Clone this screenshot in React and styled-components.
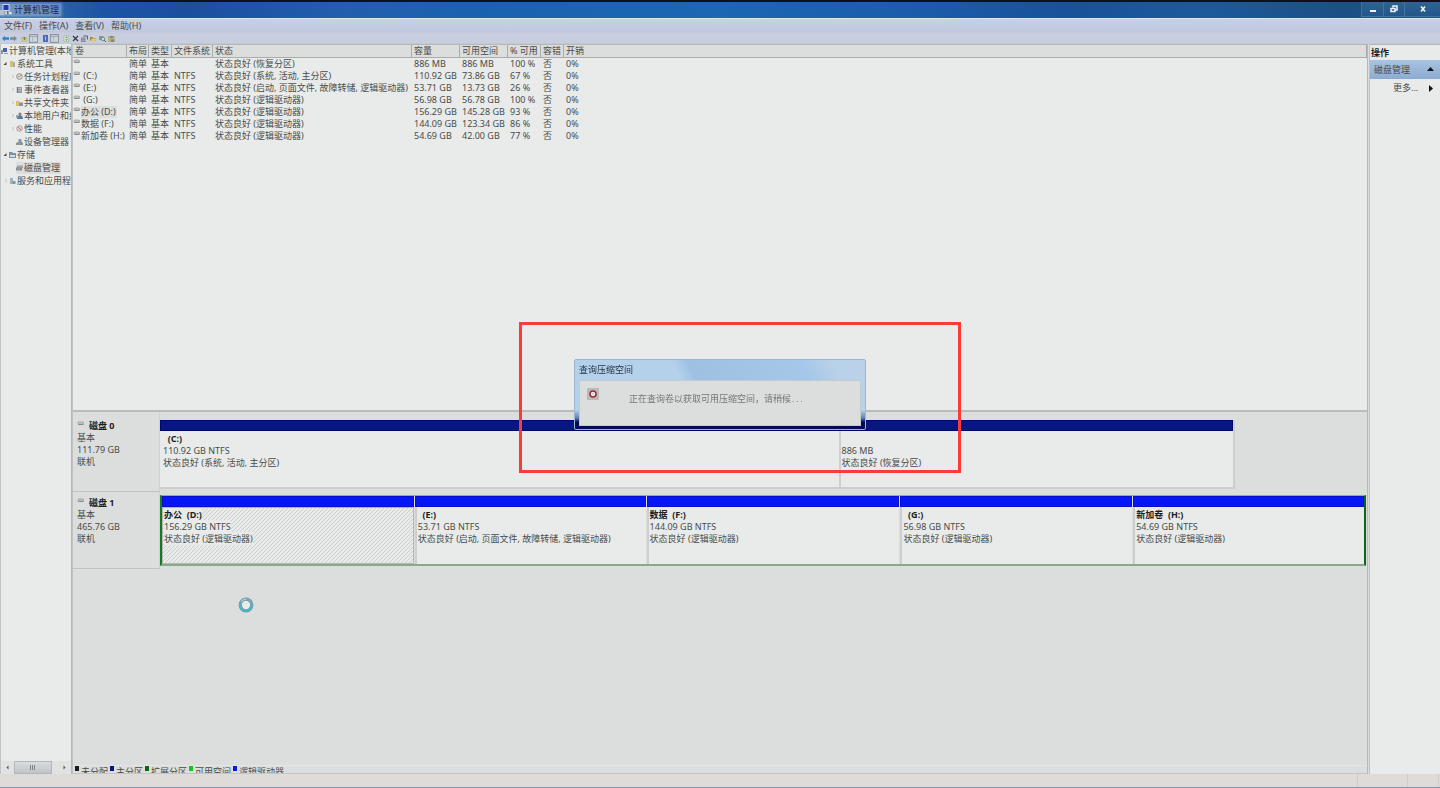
import React from 'react'
import styled, { createGlobalStyle, css } from 'styled-components'

const GlobalStyle = createGlobalStyle`
  * { box-sizing: border-box; }
  body {
    margin: 0;
    background: #dcdedd;
    color: #484b4a;
    font: 9px/12px "Noto Sans", "Noto Sans CJK SC", sans-serif;
    overflow: hidden;
  }
  button {
    border: 0;
    padding: 0;
    margin: 0;
    background: none;
    color: inherit;
    font: inherit;
  }
  svg { display: block; flex: none; }
`

const Window = styled.div`
  display: flex;
  flex-direction: column;
  height: 100vh;
  border-top: 2px solid #111;
  border-bottom: 1px solid #7398b8;
`

/* title bar */

const TitleBar = styled.header`
  display: flex;
  flex: none;
  height: 16px;
  align-items: center;
  background: linear-gradient(90deg, #3a6fb2 0, #1c55a5 7%, #1a4f9e 13%, #225fae 24%, #1a62b0 32%, #1b67b4 50%, #1a5cab 64%, #18529a 74%, #1c5a9c 84%, #1c4f86 93%, #1f5388 100%);
`

const TitleLabel = styled.h1`
  display: flex;
  align-items: center;
  gap: 2px;
  margin: 0;
  padding-right: 2px;
  font-size: 9px;
  font-weight: 400;
  line-height: 12px;
  color: #1f2937;
  background: rgba(150, 175, 210, 0.6);
  box-shadow: 0 0 3px 1px rgba(150, 175, 210, 0.6);
`

const WindowButtons = styled.div`
  display: flex;
  align-self: flex-start;
  margin-left: auto;
  height: 15px;
  border: 1px solid #47729f;
  border-width: 0 0 1px 1px;
`

const WindowButton = styled.button`
  display: flex;
  align-items: center;
  justify-content: center;
  width: ${p => (p.$wide ? 36 : 21)}px;
  background: linear-gradient(#2f6297, #235689);

  &:not(:first-child) { border-left: 1px solid #47729f; }
`

/* menu and toolbar */

const MenuBar = styled.nav`
  display: flex;
  flex: none;
  gap: 7px;
  height: 14px;
  padding: 1px 4px 0;
  border-top: 1px solid #dfe5ee;
  background: linear-gradient(#c9d0e1, #bfc8df);
`

const Toolbar = styled.div`
  display: flex;
  flex: none;
  gap: 4px;
  height: 12px;
  align-items: center;
  padding-left: 2px;
  background: #c6cee0;
  border-top: 1px solid #c8c9dc;
  border-bottom: 1px solid #c3c9d1;
`

const ToolGroup = styled.div`
  display: flex;
  gap: ${p => p.$gap}px;
`

const ToolButton = styled.button`
  display: flex;
  align-items: center;
  justify-content: center;
  height: 9px;
  width: ${p => (p.$pressed ? 9 : 7)}px;
  ${p => p.$pressed && css`
    border: 1px solid #8d96a3;
    background: #c0c8d2;
  `}
`

/* body */

const Workspace = styled.div`
  display: flex;
  flex: 1;
  min-height: 0;
`

const TreePane = styled.aside`
  display: flex;
  flex: none;
  flex-direction: column;
  width: 71px;
  border-left: 1px solid #c0c4c4;
  background: #e8ebe9;
  overflow: hidden;
`

const Tree = styled.ul`
  flex: 1;
  margin: 0;
  padding: 0;
  list-style: none;
  overflow: hidden;
`

const TreeItem = styled.li`
  display: flex;
  align-items: center;
  height: 13px;
  padding-left: ${p => [0, 2, 9][p.$level]}px;
  white-space: nowrap;
`

const Twisty = styled.span`
  display: flex;
  flex: none;
  width: 6px;
`

const TreeLabel = styled.span`
  display: flex;
  align-items: center;
  gap: 1px;
  padding-right: 1px;
  ${p => p.$selected && css`
    background: #dcdedd;
  `}
`

const ScrollBar = styled.div`
  display: flex;
  flex: none;
  height: 13px;
  background: #e0e3e2;
`

const ScrollButton = styled.button`
  display: flex;
  align-items: center;
  justify-content: center;
  width: 13px;
`

const ScrollThumb = styled.div`
  display: flex;
  align-items: center;
  justify-content: center;
  width: 38px;
  margin-right: 6px;
  border: 1px solid #b3b7ba;
  background: linear-gradient(#d9dcde, #c0c4c8);
`

const Splitter = styled.div`
  flex: none;
  width: ${p => p.$width}px;
  background: #dcdedd;
  border-left: 1px solid #b5b8b7;
  border-right: 1px solid #bfc2c1;
`

const Main = styled.main`
  display: flex;
  flex: 1;
  flex-direction: column;
  min-width: 0;
  border-bottom: 1px solid #c3c6c5;
`

const VolumeList = styled.section`
  flex: none;
  height: 368px;
  background: #e8ebe9;
  border-top: 1px solid #b5b8b7;
  border-bottom: 2px solid #b9bcbb;
`

const VolumeTable = styled.table`
  width: 100%;
  table-layout: fixed;
  border-collapse: separate;
  border-spacing: 0;

  th, td {
    padding: 0 0 0 2px;
    white-space: nowrap;
    text-align: left;
    font-weight: 400;
  }
  th {
    height: 13px;
    background: #dcdedd;
    border-right: 1px solid #a9acab;
    border-bottom: 1px solid #a9acab;
  }
  td { height: 12px; }
  td:first-child { padding-left: 0; }
`

const VolumeName = styled.span`
  display: flex;
  height: 12px;
  white-space: pre;
`

const NameText = styled.span`
  padding-right: 1px;
  background: ${p => (p.$selected ? '#dcdedd' : 'transparent')};
`

/* disk map */

const DiskMap = styled.section`
  display: flex;
  flex: 1;
  flex-direction: column;
  min-height: 0;
  background: #dcdedd;
`

const DiskRow = styled.div`
  display: flex;
  height: ${p => p.$height}px;
`

const DiskInfo = styled.div`
  flex: none;
  width: 87px;
  padding: ${p => p.$top}px 0 0 4px;
  border-right: 1px solid #d0d2d1;
  border-bottom: 1px solid #c0c3c2;
`

const DiskName = styled.strong`
  display: flex;
  gap: 4px;
  color: #1c1e1d;
`

const Track = styled.div`
  flex: 1;
  min-width: 0;
  padding: ${p => p.$top}px 1px 3px 0;
`

const Volumes = styled.div`
  display: flex;
  height: 100%;
  ${p => p.$extended ? css`
    gap: 1px;
    border: 1px solid #86b587;
    border-left: 2px solid #167a20;
    border-right: 2px solid #0c6416;
    border-bottom: 2px solid #86ab88;
  ` : css`
    width: calc(89% + 2px);
    border-right: 2px solid #cdcfce;
    border-bottom: 2px solid #cdcfce;
  `}
`

const Volume = styled.div`
  display: flex;
  flex: ${p => p.$size} 1 0;
  flex-direction: column;
  min-width: 0;

  &:not(:first-child) > p { border-left: 2px solid #cdcfce; }
`

const Bar = styled.div`
  flex: none;
  height: 11px;
  border: 1px solid ${p => (p.$logical ? '#0a10c8' : '#02066b')};
  background: ${p => (p.$logical ? '#0716f5' : '#081682')};
`

const VolumeBody = styled.p`
  flex: 1;
  margin: 0;
  padding: 2px 0 0 ${p => (p.$first ? 3 : 1)}px;
  background: #e8ebe9;
  white-space: pre;
  overflow: hidden;
  ${p => p.$selected && css`
    border: 1px solid #b3b6b5;
    padding: 1px 0 0 1px;
    background-image: linear-gradient(135deg, #cbcecd 20%, #e8ebe9 20%, #e8ebe9 55%, #cbcecd 55%, #cbcecd 70%, #e8ebe9 70%);
    background-size: 4px 4px;

    span, strong { background: #e8ebe9; }
  `}
`

const Strong = styled.strong`
  color: #1c1e1d;
`

const Legend = styled.ul`
  display: flex;
  gap: 2px;
  flex: none;
  height: 8px;
  margin: auto 0 0;
  padding: 0 0 0 2px;
  list-style: none;
  border-top: 1px solid #e3e6e4;
  overflow: hidden;
`

const LegendItem = styled.li`
  display: flex;
  gap: 2px;
  line-height: 12px;

  &::before {
    content: '';
    width: 4px;
    height: 5px;
    background: ${p => p.$color};
  }
`

/* actions */

const Actions = styled.aside`
  flex: none;
  width: 70px;
  border-top: 1px solid #b5b8b7;
  background: #e8ebe9;
`

const ActionsTitle = styled.h2`
  height: 15px;
  margin: 0;
  padding: 2px 0 0 1px;
  font-size: 9px;
  line-height: 12px;
  color: #1c1e1d;
`

const ActionsButton = styled.button`
  display: flex;
  align-items: center;
  justify-content: space-between;
  width: 100%;
  height: 18px;
  padding: 0 6px 0 4px;
  ${p => p.$heading ? css`
    height: 19px;
    background: linear-gradient(#a8c3e2, #8dabd0);
  ` : css`
    padding-left: 23px;
  `}
`

const StatusBar = styled.footer`
  display: flex;
  flex: none;
  justify-content: flex-end;
  height: 13px;
  padding-right: 1px;
  background: #dedbd9;
`

const StatusCell = styled.span`
  width: ${p => p.$width}px;
  border-left: 1px solid #cfcdcc;

  &:last-child { border-right: 1px solid #cfcdcc; }
`

/* things floating over the window */

const Dialog = styled.section`
  position: fixed;
  top: 50%;
  left: 50%;
  width: 292px;
  height: 71px;
  margin: -35px 0 0 -146px;
  padding: 0 4px 4px;
  border: 1px solid #9db4c9;
  border-radius: 2px;
  background:
    linear-gradient(#a5c8ea00 0 50px, #5f82b0 58px, #060b58 62px),
    linear-gradient(65deg, #b4d1ec 0 40%, #9dc0e3 45%, #a5c7ea 80%, #b9d2e9 90%);
`

const DialogTitle = styled.h2`
  margin: 0;
  height: 20px;
  font-size: 9px;
  font-weight: 400;
  line-height: 20px;
  color: #263341;
`

const DialogBody = styled.div`
  display: flex;
  height: 46px;
  padding: 7px;
  border: 1px solid #c3cbd2;
  background: #dcdedd;
  color: #747675;
`

const DialogText = styled.p`
  margin: 5px 0 0 30px;
  font-family: "Noto Sans CJK SC", sans-serif;
  white-space: nowrap;
`

const Dots = styled.span`
  font-family: "Liberation Mono", monospace;
  font-size: 7px;
`

const Highlight = styled.div`
  position: fixed;
  top: 50%;
  left: 50%;
  width: 442px;
  height: 151px;
  margin: -72px 0 0 -201px;
  border: 3px solid #fb3a3a;
  pointer-events: none;
`

const BusyCursor = styled.div`
  position: fixed;
  top: 597px;
  left: 238px;
`

const drawings = {
  app: <><rect x="1.500" y="0" width="4" height="4.200" fill="#dbe4ef" /><rect x="2" y=".5" width="3" height="3" fill="#1f37b5" /><path d="M0 3.500h2.500v3H0z" fill="#b9c0c6" /><path d="M3 4.500h3.500l.5 1.500H3z" fill="#e0e2e0" /><path d="M4 4h1v2H4z" fill="#63707c" /></>,
  computer: <><rect x="2" y="1" width="4" height="4" fill="#4a66a6" /><path d="M0 3h2v4H0zM3 6h4v1H3z" fill="#8d99a5" /></>,
  tools: <><path d="M1 1h3v6H1z" fill="#d3bd80" /><path d="M4 2h2v5H4z" fill="#a7acaf" /></>,
  clock: <><circle cx="3.5" cy="3.5" r="2.800" fill="#e3e3dc" stroke="#85898d" /><path d="M3.500 3.700 5 2M3.500 3.700H2" stroke="#a17b2f" fill="none" strokeWidth=".8" /></>,
  event: <><rect x="1" y="1" width="5" height="6" fill="#949cab" /><path d="M2 2.500h3M2 4.500h3" stroke="#cdb3ba" /><path d="M1.300 1v6" stroke="#5f6fa0" /></>,
  share: <><path d="M0 2h3l1 1h3v4H0z" fill="#d9bd74" /><path d="M3 4h4v3H3z" fill="#8095a8" /></>,
  users: <><circle cx="4" cy="2" r="1.600" fill="#8f7f78" /><path d="M1 7c0-3 2-4 3-4s3 1 3 4z" fill="#5c77a8" /><path d="M0 3h2v3H0z" fill="#9aa5ae" /></>,
  perf: <><circle cx="3.5" cy="3.5" r="2.800" fill="#e4d2d0" stroke="#b38f8d" strokeWidth=".8" /><path d="M2 2l3 3" stroke="#b9706e" /></>,
  device: <><path d="M2.500 1h3v3h-3z" fill="#8995a0" /><path d="M0 5l2-1h4l1 1v2H0z" fill="#8a959e" /></>,
  storage: <><path d="M0 1h3l1 1h3v5H0z" fill="#7591ab" /><path d="M1 4h5v2H1z" fill="#d3dce2" /></>,
  disk: <><path d="M1 1.500h6v2.500H1z" fill="#a3a7a6" /><path d="M0 3.500h6v3H0z" fill="#858a89" /><path d="M1 5h3" stroke="#b9bcbb" strokeWidth=".7" /></>,
  services: <><path d="M1 1h3v6H1z" fill="#9fb2bf" /><path d="M3.500 4h3v3h-3z" fill="#7f97aa" /></>,
  back: <path d="M0 3.500 3 .8v1.500h4v2.400H3v1.500z" fill="#2688cf" />,
  forward: <path d="M7 3.500 4 .8v1.500H0v2.400h4v1.500z" fill="#7e8996" />,
  up: <><path d="M0 1.500h3l1 1h3V7H0z" fill="#cfc38c" /><path d="M3.500 5V2M2 3.500 3.500 2 5 3.500" stroke="#4c9650" fill="none" /></>,
  pane: <><rect x="0" y="1" width="7" height="5" fill="#cfd4d8" /><path d="M0 1.500h7" stroke="#a3abb5" /><path d="M2.500 2v4" stroke="#b1b8c0" /></>,
  help: <><rect x="1" y="0" width="5" height="7" fill="#4b6bb8" /><path d="M3.500 1.500v4" stroke="#cdd8ee" strokeWidth=".8" /></>,
  refresh: <><rect x="1" y=".3" width="4.800" height="6.400" fill="#dfe6e1" stroke="#a0b0a2" strokeWidth=".6" /><path d="M3.500 1.200 5 3H2zM3.500 6 2 4.200h3z" fill="#5fa361" /></>,
  remove: <path d="M1 1l5 5M6 1 1 6" stroke="#333a41" strokeWidth="1.200" />,
  props: <><path d="M0 2.500h4.500V7H0z" fill="#7f8790" /><path d="M1 4h2.500M1 5.500h2.500" stroke="#c5ccd2" strokeWidth=".6" /><path d="M2.500 1H6.500v3.500" fill="none" stroke="#5a626b" /></>,
  open: <><path d="M0 2h3v1h3v3H0z" fill="#a98d3c" /><path d="M2 3.500h5L5 6.500H0z" fill="#dccb7e" /></>,
  search: <><path d="M0 1h4.500v4H0z" fill="#8a9c7e" /><circle cx="4" cy="4" r="1.700" fill="#cbdde6" stroke="#6b7c88" strokeWidth=".8" /><path d="M5 5l2 2" stroke="#555f68" /></>,
  save: <><path d="M0 1h7v6H0z" fill="#b9b27a" /><path d="M2 1h3v2H2zM3 4.500h3V7H3z" fill="#7c8591" /></>,
}

function Icon({ name, size = 7 }) {
  return <svg width={size} height={size} viewBox="0 0 7 7" aria-hidden="true">{drawings[name]}</svg>
}

function DriveIcon() {
  return (
    <svg width="8" height="8" viewBox="0 0 8 8" aria-hidden="true">
      <rect x="1" y="2" width="5.500" height="2.500" rx="1" fill="#c9cccb" stroke="#8b8f8e" strokeWidth=".7" />
      <path d="M1.500 4.300h5" stroke="#6f7372" strokeWidth=".7" />
    </svg>
  )
}

const tree = [
  { level: 0, icon: 'computer', text: '计算机管理(本地)' },
  { level: 1, icon: 'tools', text: '系统工具', open: true },
  { level: 2, icon: 'clock', text: '任务计划程序', closed: true },
  { level: 2, icon: 'event', text: '事件查看器', closed: true },
  { level: 2, icon: 'share', text: '共享文件夹', closed: true },
  { level: 2, icon: 'users', text: '本地用户和组', closed: true },
  { level: 2, icon: 'perf', text: '性能', closed: true },
  { level: 2, icon: 'device', text: '设备管理器' },
  { level: 1, icon: 'storage', text: '存储', open: true },
  { level: 2, icon: 'disk', text: '磁盘管理', selected: true },
  { level: 1, icon: 'services', text: '服务和应用程序', closed: true },
]

const columns = [
  ['卷', 54], ['布局', 22], ['类型', 23], ['文件系统', 41], ['状态', 199],
  ['容量', 48], ['可用空间', 48], ['% 可用', 33], ['容错', 23], ['开销'],
]

const volumes = [
  ['', '', '状态良好 (恢复分区)', '886 MB', '886 MB', '100 %'],
  [' (C:)', 'NTFS', '状态良好 (系统, 活动, 主分区)', '110.92 GB', '73.86 GB', '67 %'],
  [' (E:)', 'NTFS', '状态良好 (启动, 页面文件, 故障转储, 逻辑驱动器)', '53.71 GB', '13.73 GB', '26 %'],
  [' (G:)', 'NTFS', '状态良好 (逻辑驱动器)', '56.98 GB', '56.78 GB', '100 %'],
  ['办公 (D:)', 'NTFS', '状态良好 (逻辑驱动器)', '156.29 GB', '145.28 GB', '93 %'],
  ['数据 (F:)', 'NTFS', '状态良好 (逻辑驱动器)', '144.09 GB', '123.34 GB', '86 %'],
  ['新加卷 (H:)', 'NTFS', '状态良好 (逻辑驱动器)', '54.69 GB', '42.00 GB', '77 %'],
]

const disks = [
  {
    name: '磁盘 0', size: '111.79 GB', height: 80, infoTop: 8, trackTop: 8,
    parts: [
      { size: 679, name: '  (C:)', info: '110.92 GB NTFS', status: '状态良好 (系统, 活动, 主分区)' },
      { size: 395, name: ' ', info: '886 MB', status: '状态良好 (恢复分区)' },
    ],
  },
  {
    name: '磁盘 1', size: '465.76 GB', height: 77, infoTop: 5, trackTop: 3, extended: true,
    parts: [
      { size: 252, name: '办公  (D:)', info: '156.29 GB NTFS', status: '状态良好 (逻辑驱动器)', selected: true },
      { size: 231, name: '  (E:)', info: '53.71 GB NTFS', status: '状态良好 (启动, 页面文件, 故障转储, 逻辑驱动器)' },
      { size: 253, name: '数据  (F:)', info: '144.09 GB NTFS', status: '状态良好 (逻辑驱动器)' },
      { size: 232, name: '  (G:)', info: '56.98 GB NTFS', status: '状态良好 (逻辑驱动器)' },
      { size: 231, name: '新加卷  (H:)', info: '54.69 GB NTFS', status: '状态良好 (逻辑驱动器)' },
    ],
  },
]

const legend = [
  ['未分配', '#1b1b1b'], ['主分区', '#081682'], ['扩展分区', '#0c6416'],
  ['可用空间', '#12c81c'], ['逻辑驱动器', '#0716f5'],
]

const tools = [
  { gap: 1, items: [['back', '后退'], ['forward', '前进']] },
  { gap: 1, items: [['up', '向上'], ['pane', '控制台树', true]] },
  { gap: 1, items: [['help', '帮助'], ['pane', '操作窗格', true]] },
  { gap: 2, items: [['refresh', '刷新'], ['remove', '删除'], ['props', '属性'], ['open', '打开'], ['search', '查找'], ['save', '保存']] },
]

function VolumeGrid() {
  return (
    <VolumeTable>
      <colgroup>
        {columns.map(([name, width]) => <col key={name} width={width} />)}
      </colgroup>
      <thead>
        <tr>{columns.map(([name]) => <th key={name} scope="col">{name}</th>)}</tr>
      </thead>
      <tbody>
        {volumes.map(([name, fs, status, size, free, percent]) => (
          <tr key={name}>
            <td>
              <VolumeName>
                <DriveIcon />
                <NameText $selected={name === '办公 (D:)'}>{name}</NameText>
              </VolumeName>
            </td>
            <td>简单</td>
            <td>基本</td>
            <td>{fs}</td>
            <td>{status}</td>
            <td>{size}</td>
            <td>{free}</td>
            <td>{percent}</td>
            <td>否</td>
            <td>0%</td>
          </tr>
        ))}
      </tbody>
    </VolumeTable>
  )
}

function Disk({ disk }) {
  return (
    <DiskRow $height={disk.height}>
      <DiskInfo $top={disk.infoTop}>
        <DiskName><DriveIcon />{disk.name}</DiskName>
        <div>基本</div>
        <div>{disk.size}</div>
        <div>联机</div>
      </DiskInfo>
      <Track $top={disk.trackTop}>
        <Volumes $extended={disk.extended}>
          {disk.parts.map((part, i) => (
            <Volume key={part.name} $size={part.size}>
              <Bar $logical={disk.extended} />
              <VolumeBody $first={i === 0} $selected={part.selected}>
                <Strong>{part.name}</Strong><br />
                <span>{part.info}</span><br />
                <span>{part.status}</span>
              </VolumeBody>
            </Volume>
          ))}
        </Volumes>
      </Track>
    </DiskRow>
  )
}

export default function App() {
  return (
    <>
      <GlobalStyle />
      <Window>
        <TitleBar>
          <TitleLabel><Icon name="app" size={12} />计算机管理</TitleLabel>
          <WindowButtons>
            <WindowButton aria-label="最小化">
              <svg width="8" height="8"><path d="M1 6h6" stroke="#eef3f8" strokeWidth="2" /></svg>
            </WindowButton>
            <WindowButton aria-label="还原">
              <svg width="8" height="8"><path d="M3 2.500V1h4v4H5.500M1 3.500h4v3H1z" fill="none" stroke="#eef3f8" strokeWidth="1.500" /></svg>
            </WindowButton>
            <WindowButton $wide aria-label="关闭">
              <svg width="8" height="8"><path d="M2 1.500l4 5M6 1.500l-4 5" stroke="#eef3f8" strokeWidth="1.600" /></svg>
            </WindowButton>
          </WindowButtons>
        </TitleBar>
        <MenuBar>
          {['文件(F)', '操作(A)', '查看(V)', '帮助(H)'].map(item => <button key={item}>{item}</button>)}
        </MenuBar>
        <Toolbar>
          {tools.map((group, i) => (
            <ToolGroup key={i} $gap={group.gap}>
              {group.items.map(([icon, label, pressed]) => (
                <ToolButton key={label} aria-label={label} $pressed={pressed}><Icon name={icon} /></ToolButton>
              ))}
            </ToolGroup>
          ))}
        </Toolbar>

        <Workspace>
          <TreePane>
            <Tree>
              {tree.map(item => (
                <TreeItem key={item.text} $level={item.level}>
                  {item.level > 0 && (
                    <Twisty>
                      <svg width="5" height="5">
                        {item.open && <path d="M3.500 1v3h-3z" fill="#444" />}
                        {item.closed && <path d="M2 1l2 1.500L2 4" fill="none" stroke="#b5b8b7" strokeWidth=".7" />}
                      </svg>
                    </Twisty>
                  )}
                  <TreeLabel $selected={item.selected}><Icon name={item.icon} />{item.text}</TreeLabel>
                </TreeItem>
              ))}
            </Tree>
            <ScrollBar>
              <ScrollButton aria-label="向左滚动">
                <svg width="5" height="5"><path d="M3.500 .5v4L1.500 2.500z" fill="#555" /></svg>
              </ScrollButton>
              <ScrollThumb>
                <svg width="6" height="5"><path d="M.5 0v5M2.500 0v5M4.500 0v5" stroke="#7d8285" /></svg>
              </ScrollThumb>
              <ScrollButton aria-label="向右滚动">
                <svg width="5" height="5"><path d="M1.500 .5v4L3.500 2.500z" fill="#555" /></svg>
              </ScrollButton>
            </ScrollBar>
          </TreePane>
          <Splitter $width={2} />

          <Main>
            <VolumeList><VolumeGrid /></VolumeList>
            <DiskMap>
              {disks.map(disk => <Disk key={disk.name} disk={disk} />)}
              <Legend>
                {legend.map(([name, color]) => <LegendItem key={name} $color={color}>{name}</LegendItem>)}
              </Legend>
            </DiskMap>
          </Main>
          <Splitter $width={3} />

          <Actions>
            <ActionsTitle>操作</ActionsTitle>
            <ActionsButton $heading>
              磁盘管理
              <svg width="7" height="5"><path d="M3.500 0 7 4H0z" fill="#111" /></svg>
            </ActionsButton>
            <ActionsButton>
              更多...
              <svg width="6" height="7"><path d="M1 0l4 3.500L1 7z" fill="#111" /></svg>
            </ActionsButton>
          </Actions>
        </Workspace>
        <StatusBar><StatusCell $width={50} /><StatusCell $width={32} /></StatusBar>
      </Window>

      <Dialog role="dialog" aria-labelledby="query-title">
        <DialogTitle id="query-title">查询压缩空间</DialogTitle>
        <DialogBody>
          <svg width="12" height="12" aria-hidden="true">
            <rect width="12" height="12" fill="#b9bbba" />
            <circle cx="6" cy="6" r="3" fill="#f0eeee" stroke="#9c2b30" strokeWidth="1.500" />
            <circle cx="6" cy="6" r=".8" fill="#bcbcbc" />
          </svg>
          <DialogText>正在查询卷以获取可用压缩空间，请稍候<Dots>...</Dots></DialogText>
        </DialogBody>
      </Dialog>
      <Highlight />
      <BusyCursor>
        <svg width="16" height="16" aria-hidden="true">
          <defs>
            <linearGradient id="ring" x1="0" y1="0" x2="0" y2="1">
              <stop offset="0" stopColor="#86a5b8" />
              <stop offset="1" stopColor="#3fb9c6" />
            </linearGradient>
          </defs>
          <circle cx="8" cy="8" r="5.800" fill="#e8ebe9" stroke="#6d93a3" strokeWidth="3.200" />
          <circle cx="8" cy="8" r="5.800" fill="none" stroke="url(#ring)" strokeWidth="2.200" />
          <path d="M3.500 4.500A5.800 5.800 0 0 1 8 2.200" fill="none" stroke="#b8d3de" strokeWidth="1.200" />
        </svg>
      </BusyCursor>
    </>
  )
}
